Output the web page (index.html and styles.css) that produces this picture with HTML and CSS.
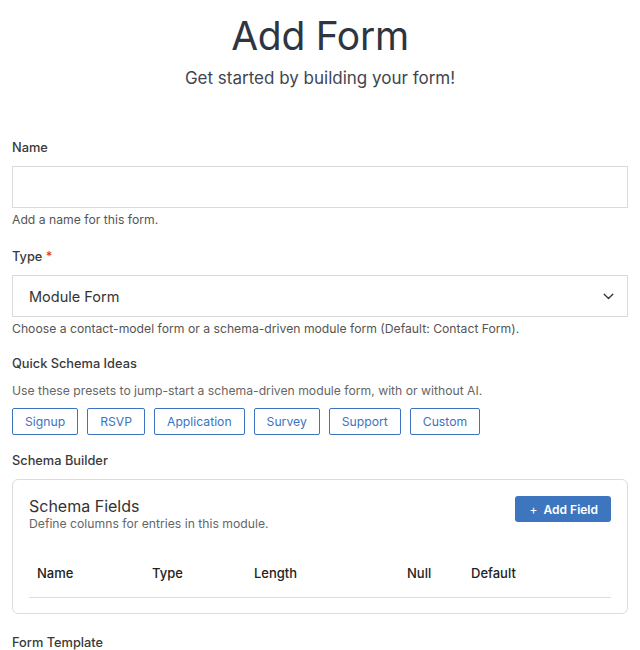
FILE: index.html
```html
<!DOCTYPE html>
<html lang="en">
<head>
<meta charset="utf-8">
<title>Add Form</title>
<link rel="stylesheet" href="styles.css">
</head>
<body>
<div class="page">
  <header class="hero">
    <h1 class="title">Add Form</h1>
    <p class="subtitle">Get started by building your form!</p>
  </header>

  <div class="field f-name">
    <label class="label">Name</label>
    <div class="input"></div>
    <p class="help">Add a name for this form.</p>
  </div>

  <div class="field f-type">
    <label class="label">Type <span class="req">*</span></label>
    <div class="input select">
      <span class="select-value">Module Form</span>
      <svg class="chev" width="11" height="7" viewBox="0 0 11 7"><path d="M1.2 1.2 L5.5 5.5 L9.8 1.2" fill="none" stroke="#333" stroke-width="1.3" stroke-linecap="round" stroke-linejoin="round"/></svg>
    </div>
    <p class="help">Choose a contact-model form or a schema-driven module form (Default: Contact Form).</p>
  </div>

  <div class="field f-quick">
    <label class="label">Quick Schema Ideas</label>
    <p class="desc">Use these presets to jump-start a schema-driven module form, with or without AI.</p>
    <div class="presets">
      <button class="preset">Signup</button>
      <button class="preset">RSVP</button>
      <button class="preset">Application</button>
      <button class="preset">Survey</button>
      <button class="preset">Support</button>
      <button class="preset">Custom</button>
    </div>
  </div>

  <div class="field f-builder">
    <label class="label">Schema Builder</label>
    <div class="card">
      <div class="card-head">
        <div>
          <h2 class="card-title">Schema Fields</h2>
          <p class="card-sub">Define columns for entries in this module.</p>
        </div>
        <button class="add-btn"><span class="plus">+</span>Add Field</button>
      </div>
      <table class="schema">
        <thead>
          <tr>
            <th class="c-name">Name</th>
            <th class="c-type">Type</th>
            <th class="c-len">Length</th>
            <th class="c-null">Null</th>
            <th class="c-def">Default</th>
            <th class="c-act"></th>
          </tr>
        </thead>
      </table>
    </div>
  </div>

  <div class="field">
    <label class="label">Form Template</label>
  </div>
</div>
</body>
</html>
```

FILE: styles.css
```css
* { box-sizing: border-box; }
html, body { margin: 0; padding: 0; background: #fff; }
body {
  font-family: Inter, "Noto Sans", "Liberation Sans", sans-serif;
  color: #333;
  font-size: 13px;
}
.page { padding: 0 12px; }

.hero { text-align: center; padding-top: 13px; margin-bottom: 50px; }
.title {
  margin: 0;
  font-size: 39px;
  line-height: 46px;
  font-weight: 400;
  color: #2f3540;
  letter-spacing: -0.3px;
}
.subtitle {
  margin: 8px 0 0;
  font-size: 17px;
  line-height: 22px;
  color: #3f4650;
  font-weight: 400;
}

.field { margin-bottom: 20px; }
.f-name { margin-bottom: 19px; }
.f-type { margin-bottom: 17px; }
.f-quick { margin-bottom: 17px; }
.f-builder { margin-bottom: 20px; }

.label {
  display: block;
  font-size: 12.8px;
  line-height: 18px;
  font-weight: 500;
  color: #3a3a3a;
  margin-bottom: 9px;
}
.req { color: #d9342b; }

.input {
  height: 42px;
  border: 1px solid #dadada;
  background: #fff;
}
.select {
  display: flex;
  align-items: center;
  justify-content: space-between;
  padding: 0 13px 0 16px;
}
.select-value { font-size: 14.5px; color: #333; }
.chev { display: block; }

.help {
  margin: 3px 0 0;
  font-size: 12.2px;
  line-height: 18px;
  color: #555;
}
.desc {
  margin: 0 0 8px;
  font-size: 12.2px;
  line-height: 18px;
  color: #666;
}

.presets { display: flex; gap: 9px; }
.preset {
  font-family: inherit;
  font-size: 12.2px;
  line-height: 15px;
  padding: 5px 12px;
  background: #fff;
  color: #3a74bf;
  border: 1px solid #3a74bf;
  border-radius: 2px;
}

.card {
  border: 1px solid #dcdcdc;
  border-radius: 6px;
  padding: 16px 16px 15px;
}
.card-head { display: flex; justify-content: space-between; align-items: flex-start; }
.card-title {
  margin: 0;
  font-size: 16px;
  line-height: 20px;
  font-weight: 400;
  color: #333;
}
.card-sub {
  margin: 0;
  font-size: 12.2px;
  line-height: 16px;
  color: #666;
}
.add-btn {
  font-family: inherit;
  background: #3d76bf;
  color: #fff;
  border: 0;
  border-radius: 3px;
  height: 26px;
  padding: 0 13px 0 15px;
  font-size: 12px;
  font-weight: 600;
}
.plus { margin-right: 6px; font-weight: 400; }

.schema {
  width: 100%;
  border-collapse: collapse;
  margin-top: 17px;
}
.schema th {
  text-align: left;
  font-size: 13px;
  font-weight: 500;
  color: #222;
  padding: 12px 8px;
  line-height: 24px;
  border-bottom: 1px solid #dedede;
}
.c-name { width: 115px; }
.c-type { width: 102px; }
.c-len { width: 153px; }
.c-null { width: 64px; }
.c-def { width: 100px; }
```
